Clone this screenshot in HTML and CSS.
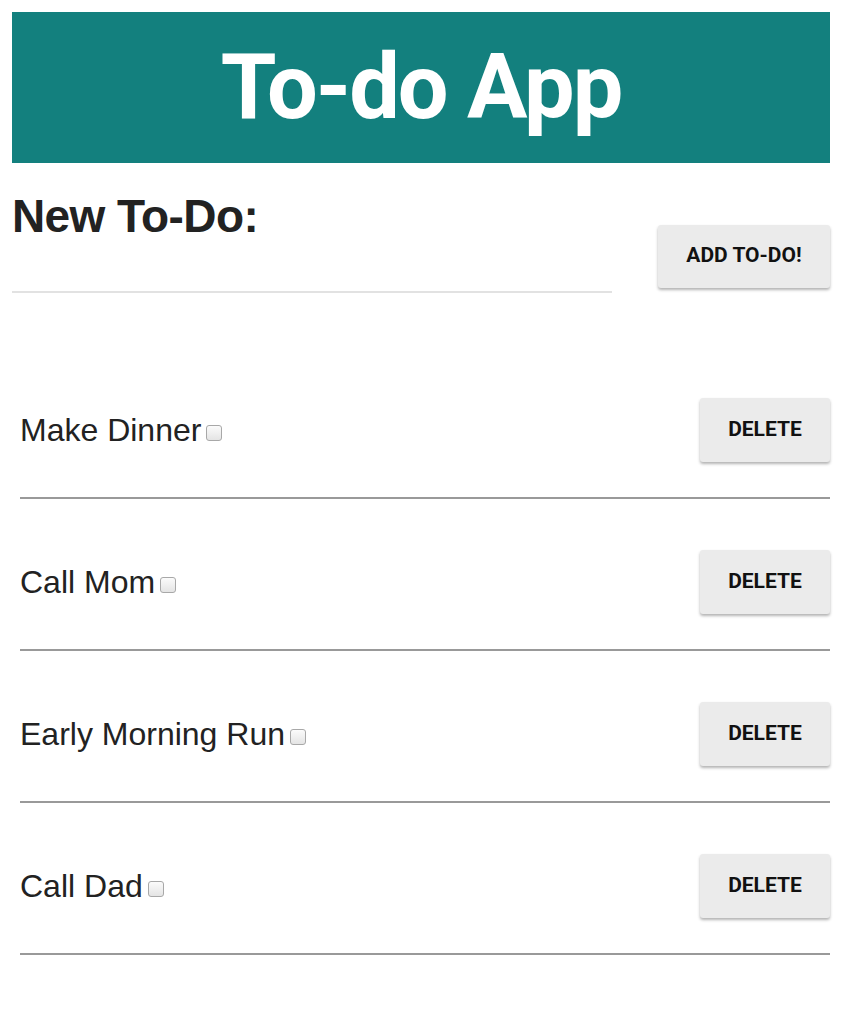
FILE: index.html
```html
<!DOCTYPE html>
<html>
<head>
<meta charset="utf-8">
<link rel="stylesheet" href="styles.css">
</head>
<body>
<div class="app">
  <header class="banner"><h1>To-do App</h1></header>
  <form class="new-form">
    <div class="field">
      <h2>New To-Do:</h2>
      <div class="input-line"></div>
    </div>
    <button type="button" class="btn add-btn">ADD TO-DO!</button>
  </form>
  <ul class="list">
    <li class="item"><span class="label">Make Dinner<span class="check"></span></span><button type="button" class="btn del-btn">DELETE</button></li>
    <li class="item"><span class="label">Call Mom<span class="check"></span></span><button type="button" class="btn del-btn">DELETE</button></li>
    <li class="item"><span class="label">Early Morning Run<span class="check"></span></span><button type="button" class="btn del-btn">DELETE</button></li>
    <li class="item"><span class="label">Call Dad<span class="check"></span></span><button type="button" class="btn del-btn">DELETE</button></li>
  </ul>
</div>
</body>
</html>
```
FILE: styles.css
```css
html, body { margin: 0; padding: 0; background: #fff; }
body { font-family: "Liberation Sans", Arial, sans-serif; color: #222; }
.app { padding: 12px 14px 0 12px; }
.banner {
  background: #13807e;
  height: 151px;
  display: flex;
  align-items: center;
  justify-content: center;
}
.banner h1 {
  margin: 0;
  color: #fff;
  font-family: Roboto, sans-serif;
  font-weight: 700;
  font-size: 90px;
  letter-spacing: -2px;
  line-height: 1;
}
.new-form {
  display: flex;
  justify-content: space-between;
  align-items: flex-start;
}
.field { width: 600px; }
.field h2 {
  margin: 0;
  padding-top: 27px;
  font-size: 46px;
  line-height: 53px;
  font-weight: 700;
  color: #222;
  letter-spacing: -0.6px;
}
.input-line { height: 48px; border-bottom: 2px solid #e2e2e2; }
.btn {
  border: none;
  background: #ebebeb;
  border-radius: 3px;
  box-shadow: 0 2px 3px rgba(0,0,0,0.3);
  font-family: Roboto, sans-serif;
  font-weight: 700;
  font-size: 21px;
  color: #111;
  padding: 0 0 3px 0;
}
.add-btn { width: 172px; height: 63px; margin-top: 62px; }
.list { list-style: none; margin: 54px 0 0 8px; padding: 0; }
.item {
  display: flex;
  justify-content: space-between;
  align-items: center;
  padding: 51px 0 35px 0;
  border-bottom: 2px solid #999;
}
.label { font-size: 32px; line-height: 40px; color: #222; }
.check {
  display: inline-block;
  vertical-align: baseline;
  box-sizing: border-box;
  width: 16px; height: 16px;
  border: 1px solid #a8a8a8;
  border-radius: 3px;
  background: linear-gradient(#fbfbfb, #e4e4e4);
  margin-left: 5px;
}
.del-btn { width: 130px; height: 64px; }
```
